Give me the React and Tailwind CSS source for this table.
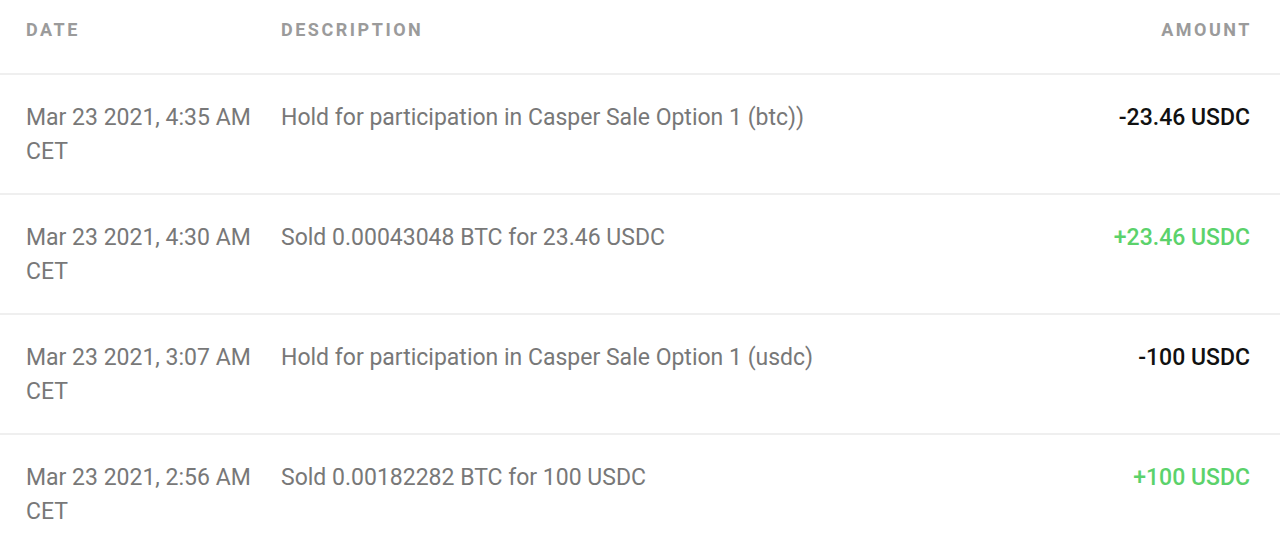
const rows = [
  { date: 'Mar 23 2021, 4:35 AM', desc: 'Hold for participation in Casper Sale Option 1 (btc))', amount: '-23.46 USDC', positive: false },
  { date: 'Mar 23 2021, 4:30 AM', desc: 'Sold 0.00043048 BTC for 23.46 USDC', amount: '+23.46 USDC', positive: true },
  { date: 'Mar 23 2021, 3:07 AM', desc: 'Hold for participation in Casper Sale Option 1 (usdc)', amount: '-100 USDC', positive: false },
  { date: 'Mar 23 2021, 2:56 AM', desc: 'Sold 0.00182282 BTC for 100 USDC', amount: '+100 USDC', positive: true },
]

export default function App() {
  return (
    <div className="w-[1280px] h-[544px] overflow-hidden bg-white font-['Roboto',sans-serif]">
      {/* Header */}
      <div className="flex items-start h-[75px] pt-[20px] pl-[26px] pr-[28px] border-b-2 border-[#efefef] text-[18px] leading-[20px] font-bold tracking-[0.14em] text-[#9b9b9b] uppercase">
        <div className="w-[255px] shrink-0">Date</div>
        <div className="flex-1">Description</div>
        <div className="text-right">Amount</div>
      </div>

      {rows.map((r, i) => (
        <div key={i} className="flex items-start h-[120px] pt-[26px] pl-[26px] pr-[30px] border-b-2 border-[#efefef] text-[23px] leading-[34px]">
          <div className="w-[255px] shrink-0 text-[#787878]">
            <div>{r.date}</div>
            <div>CET</div>
          </div>
          <div className="flex-1 text-[#787878]">{r.desc}</div>
          <div className={`text-right font-medium ${r.positive ? 'text-[#5bd26b]' : 'text-[#111111]'}`}>{r.amount}</div>
        </div>
      ))}
    </div>
  )
}
